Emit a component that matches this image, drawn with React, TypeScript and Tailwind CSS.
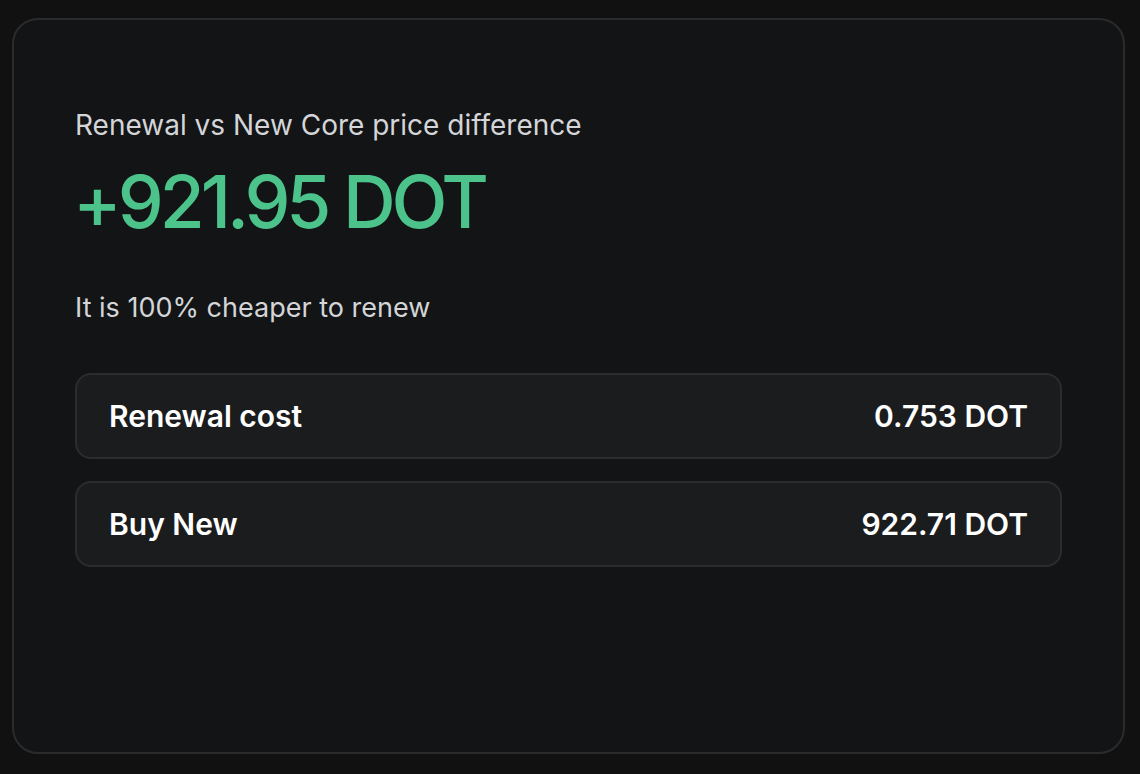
import type { JSX } from 'react';

const rows = [
  { label: 'Renewal cost', value: '0.753 DOT' },
  { label: 'Buy New', value: '922.71 DOT' },
];

export default function App(): JSX.Element {
  return (
    <main
      className="min-h-screen w-full bg-[#111111] pl-[12px] pt-[18px]"
      style={{ fontFamily: 'Inter, "Liberation Sans", sans-serif' }}
    >
      <section className="w-[1113px] h-[736px] rounded-[26px] border-2 border-[#2a2b2d] bg-[#131415] px-[61px] pt-[89px]">
        <p className="text-[28px] leading-[32px] text-[#d4d5d8]">
          Renewal vs New Core price difference
        </p>
        <h1 className="mt-[24px] -ml-[2px] text-[73px] leading-[73px] tracking-[-0.055em] font-medium text-[#4cc38a]">
          +921.95 DOT
        </h1>

        <p className="mt-[54px] text-[27px] leading-[32px] text-[#d4d5d8]">
          It is 100% cheaper to renew
        </p>

        <div className="mt-[49px] flex flex-col gap-[22px]">
          {rows.map((row) => (
            <div
              key={row.label}
              className="flex h-[86px] items-center justify-between rounded-[16px] border-2 border-[#2b2c2f] bg-[#1b1c1e] pl-[32px] pr-[32px]"
            >
              <span className="text-[30px] font-semibold text-white">{row.label}</span>
              <span className="text-[30px] font-semibold text-white">{row.value}</span>
            </div>
          ))}
        </div>
      </section>
    </main>
  );
}
